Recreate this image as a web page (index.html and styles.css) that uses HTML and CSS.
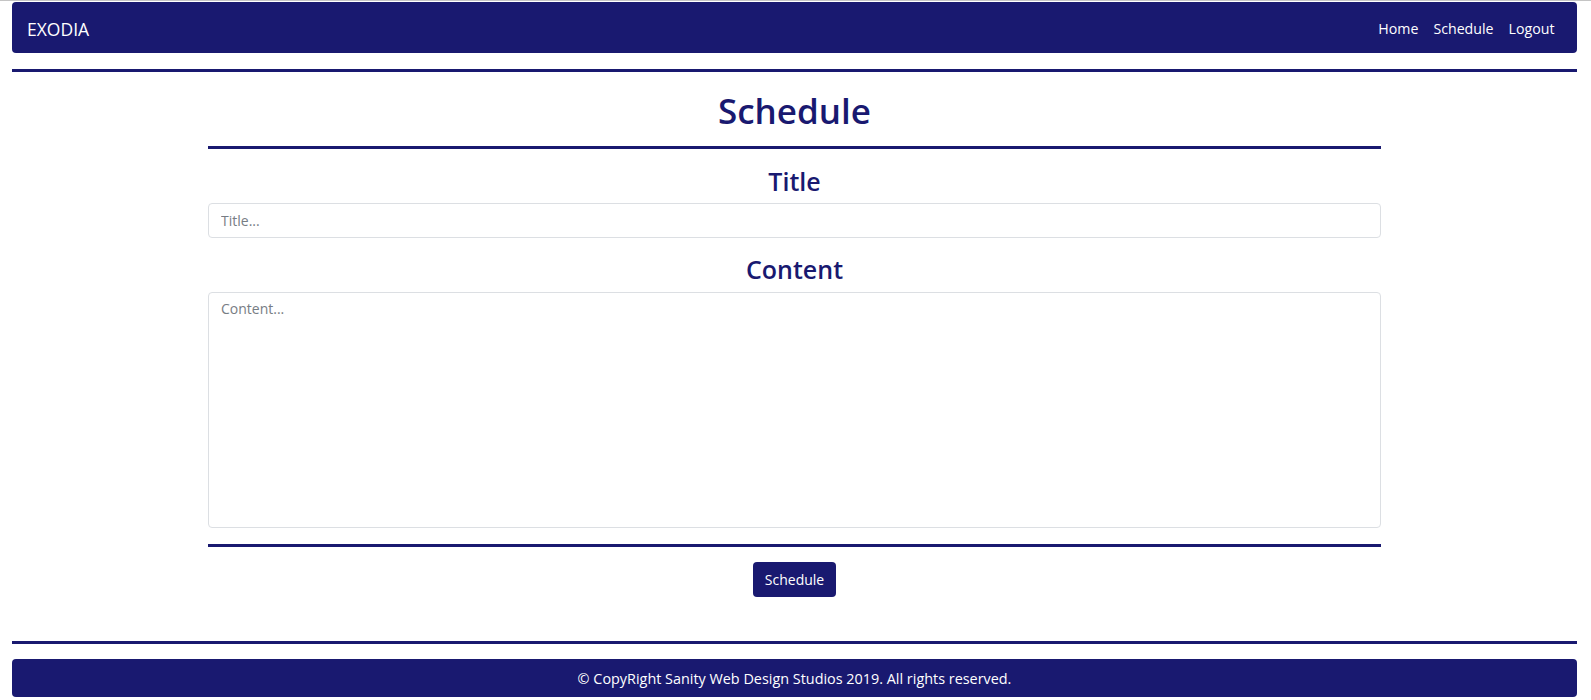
FILE: index.html
```html
<!DOCTYPE html>
<html lang="en">
<head>
<meta charset="utf-8">
<title>Schedule</title>
<link rel="stylesheet" href="styles.css">
</head>
<body>
<div class="page">
  <nav class="navbar">
    <a class="brand" href="#">EXODIA</a>
    <ul class="nav-links">
      <li><a href="#">Home</a></li>
      <li><a href="#">Schedule</a></li>
      <li><a href="#">Logout</a></li>
    </ul>
  </nav>
  <div class="rule rule-top"></div>

  <main class="container">
    <h1 class="page-title">Schedule</h1>
    <div class="rule"></div>
    <form class="form">
      <h2 class="field-title">Title</h2>
      <input class="field-input" type="text" placeholder="Title...">
      <h2 class="field-title field-title-content">Content</h2>
      <textarea class="field-textarea" placeholder="Content..."></textarea>
      <div class="rule rule-form"></div>
      <div class="actions">
        <button class="btn" type="button">Schedule</button>
      </div>
    </form>
  </main>

  <div class="rule rule-bottom"></div>
  <footer class="footer">© CopyRight Sanity Web Design Studios 2019. All rights reserved.</footer>
</div>
</body>
</html>
```

FILE: styles.css
```css
* { box-sizing: border-box; }

html, body {
  margin: 0;
  padding: 0;
  background: #ffffff;
}

body {
  border-top: 1px solid #c4c4c4;
  font-family: "Open Sans", "Noto Sans", "Liberation Sans", sans-serif;
  color: #191970;
}

.page {
  padding: 1px 14px 0 12px;
}

.navbar {
  height: 51px;
  background: #191970;
  border-radius: 4px;
  display: flex;
  align-items: center;
  justify-content: space-between;
  padding: 2px 15px 0 15px;
}

.brand {
  color: #ffffff;
  text-decoration: none;
  font-size: 17.5px;
}

.nav-links {
  list-style: none;
  margin: 0;
  padding: 0;
  display: flex;
}

.nav-links a {
  display: block;
  color: #ffffff;
  text-decoration: none;
  font-size: 14.2px;
  padding: 0 7.5px;
}

.rule {
  height: 3px;
  background: #191970;
}

.rule-top { margin-top: 16px; }

.container {
  width: 1173px;
  margin: 0 auto;
}

.page-title {
  margin: 18px 0 14px;
  font-size: 35px;
  line-height: 42px;
  font-weight: 600;
  text-align: center;
}

.form {
  display: flex;
  flex-direction: column;
}

.field-title {
  margin: 16px 0 6px;
  font-size: 25px;
  line-height: 32px;
  font-weight: 600;
  text-align: center;
}

.field-title-content {
  margin: 15px 0 7px;
}

.field-input,
.field-textarea {
  width: 100%;
  border: 1px solid #dcdfe3;
  border-radius: 4px;
  font-family: inherit;
  font-size: 14px;
  color: #495057;
  padding: 0 12px;
  outline: none;
}

.field-input {
  height: 35px;
}

.field-textarea {
  height: 236px;
  padding-top: 6px;
  resize: none;
  display: block;
}

.field-input::placeholder,
.field-textarea::placeholder {
  color: #777d84;
}

.rule-form { margin-top: 16px; }

.actions {
  display: flex;
  justify-content: center;
  margin-top: 15px;
}

.btn {
  height: 35px;
  padding: 0 12px;
  background: #191970;
  color: #ffffff;
  border: none;
  border-radius: 4px;
  font-family: inherit;
  font-size: 14px;
  cursor: pointer;
}

.rule-bottom { margin-top: 44px; }

.footer {
  margin-top: 15px;
  height: 38px;
  background: #191970;
  border-radius: 4px;
  color: #ffffff;
  font-size: 14.4px;
  display: flex;
  align-items: center;
  justify-content: center;
}
```
